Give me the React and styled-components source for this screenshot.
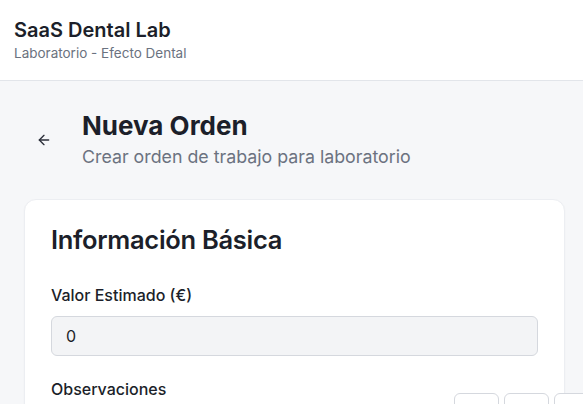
import React from "react";
import styled, { createGlobalStyle } from "styled-components";

const Global = createGlobalStyle`
  html, body { margin: 0; padding: 0; background: #f6f7f9; }
  body { font-family: Inter, "Noto Sans", sans-serif; color: #1f2330; overflow: hidden; }
  * { box-sizing: border-box; }
`;

const Header = styled.header`
  height: 81px;
  background: #ffffff;
  border-bottom: 1px solid #e2e5ea;
  padding: 17px 14px 0;
`;

const Brand = styled.h1`
  margin: 0;
  font-size: 20px;
  line-height: 26px;
  font-weight: 600;
  color: #1c1f2a;
`;

const BrandSub = styled.p`
  margin: 1px 0 0;
  font-size: 13.5px;
  line-height: 18px;
  color: #6b7280;
`;

const Main = styled.main`
  padding: 29px 18px 0 24px;
`;

const TitleRow = styled.div`
  display: flex;
  align-items: center;
  gap: 18px;
`;

const BackButton = styled.button`
  width: 40px;
  height: 40px;
  border: none;
  background: transparent;
  display: flex;
  align-items: center;
  justify-content: center;
  color: #2b2f3a;
  padding: 0;
  cursor: pointer;
`;

const TitleBlock = styled.div`
  display: flex;
  flex-direction: column;
`;

const PageTitle = styled.h2`
  margin: 0;
  font-size: 26px;
  line-height: 32px;
  font-weight: 700;
  color: #1c1f2a;
`;

const PageSub = styled.p`
  margin: 2px 0 0;
  font-size: 17.8px;
  line-height: 26px;
  color: #6b7280;
`;

const Card = styled.section`
  margin-top: 29px;
  background: #ffffff;
  border: 1px solid #eceef2;
  border-radius: 12px;
  box-shadow: 0 1px 2px rgba(16, 24, 40, 0.04);
  padding: 23px 26px 0;
  height: 260px;
`;

const CardTitle = styled.h3`
  margin: 0;
  font-size: 25.5px;
  line-height: 34px;
  font-weight: 600;
  color: #1c1f2a;
  letter-spacing: -0.3px;
`;

const Field = styled.div`
  margin-top: ${(p) => p.$top}px;
  display: flex;
  flex-direction: column;
`;

const Label = styled.label`
  font-size: 16px;
  line-height: 20px;
  font-weight: 500;
  color: #1c1f2a;
`;

const Input = styled.div`
  margin-top: 11px;
  height: 40px;
  background: #f3f4f6;
  border: 1px solid #d5d8de;
  border-radius: 6px;
  display: flex;
  align-items: center;
  padding: 0 14px;
  font-size: 16px;
  color: #1c1f2a;
`;

const LabelRow = styled.div`
  display: flex;
  align-items: flex-start;
`;

const Boxes = styled.div`
  margin-left: auto;
  margin-right: -61px;
  margin-top: 14px;
  display: flex;
  gap: 5px;
`;

const Box = styled.div`
  width: 45px;
  height: 40px;
  border: 1px solid #d5d8de;
  border-radius: 6px;
  background: #ffffff;
`;

export default function App() {
  return (
    <>
      <Global />
      <Header>
        <Brand>SaaS Dental Lab</Brand>
        <BrandSub>Laboratorio - Efecto Dental</BrandSub>
      </Header>
      <Main>
        <TitleRow>
          <BackButton aria-label="Volver">
            <svg width="16" height="16" viewBox="0 0 24 24" fill="none" stroke="currentColor" strokeWidth="2" strokeLinecap="round" strokeLinejoin="round">
              <path d="m12 19-7-7 7-7" />
              <path d="M19 12H5" />
            </svg>
          </BackButton>
          <TitleBlock>
            <PageTitle>Nueva Orden</PageTitle>
            <PageSub>Crear orden de trabajo para laboratorio</PageSub>
          </TitleBlock>
        </TitleRow>
        <Card>
          <CardTitle>Información Básica</CardTitle>
          <Field $top={28}>
            <Label>Valor Estimado (€)</Label>
            <Input>0</Input>
          </Field>
          <Field $top={23}>
            <LabelRow>
              <Label>Observaciones</Label>
              <Boxes>
                <Box />
                <Box />
                <Box />
              </Boxes>
            </LabelRow>
          </Field>
        </Card>
      </Main>
    </>
  );
}
